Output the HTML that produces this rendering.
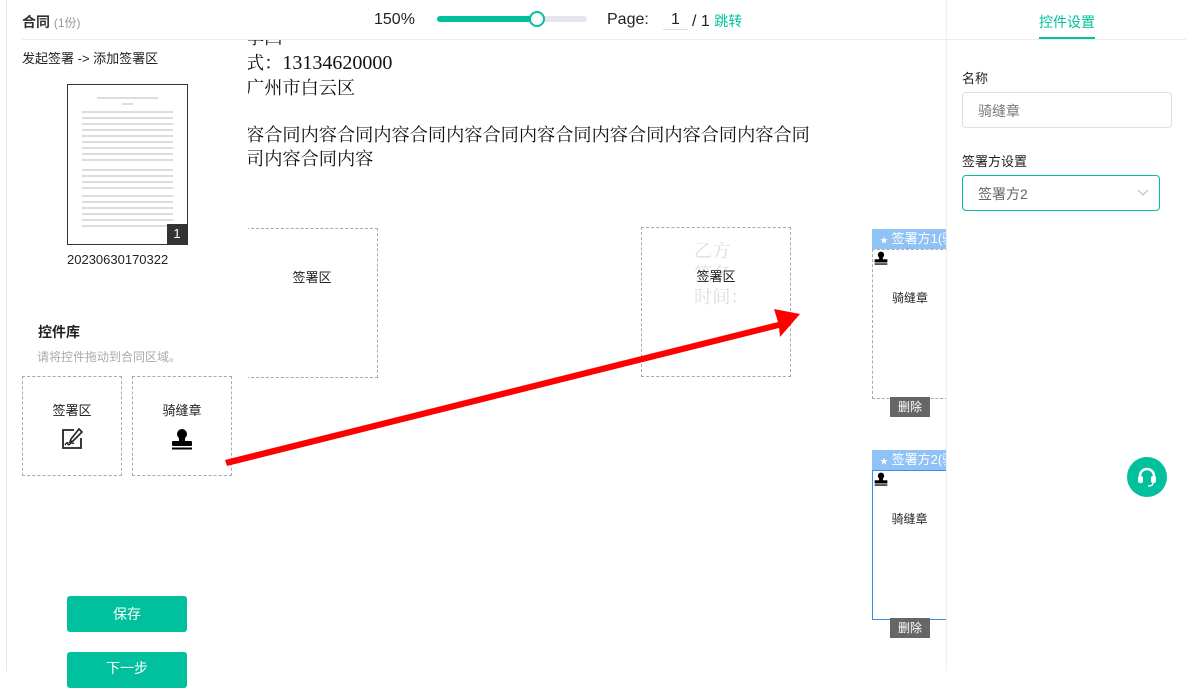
<!DOCTYPE html>
<html><head><meta charset="utf-8"><style>
*{margin:0;padding:0;box-sizing:border-box}
body{width:1186px;height:671px;overflow:hidden;background:#fff;font-family:"Liberation Sans","Noto Sans CJK SC",sans-serif;color:#222;position:relative}
.a{position:absolute}
.serif{font-family:"Liberation Serif","Noto Serif CJK SC",serif;font-size:18.2px;color:#111;white-space:nowrap}
.dash{border:1px dashed #aaa}
.btn{background:#00c09d;color:#fff;border-radius:3px;text-align:center;font-size:14px}
</style></head><body>
<div class="a" style="left:6px;top:0;width:1px;height:671px;background:#e6e6e6"></div>
<div class="a" style="left:22px;top:12px;font-size:14px;font-weight:bold;color:#333">合同 <span style="font-weight:normal;font-size:12px;color:#999">(1份)</span></div>
<div class="a" style="left:22px;top:39px;width:926px;height:1px;background:#ececec"></div>
<div class="a" style="left:946px;top:39px;width:240px;height:1px;background:#ececec"></div>
<div class="a" style="left:22px;top:48px;font-size:13px;color:#222">发起签署 -&gt; 添加签署区</div>
<div class="a" style="left:67px;top:84px;width:121px;height:161px;border:1px solid #333;background:#fff">
<div style="margin:12px 14px;">
<div style="height:2px;background:#ddd;margin:0 15px 4px"></div>
<div style="height:2px;background:#ddd;margin:0 40px 6px"></div>
<div style="height:52px;background:repeating-linear-gradient(#ddd 0 2px,transparent 2px 6px)"></div>
<div style="height:20px;margin-top:6px;background:repeating-linear-gradient(#ddd 0 2px,transparent 2px 6px)"></div>
<div style="height:34px;margin-top:6px;background:repeating-linear-gradient(#ddd 0 2px,transparent 2px 6px)"></div>
</div>
<div class="a" style="right:0;bottom:0;width:20px;height:20px;background:#333;color:#fff;font-size:13px;text-align:center;line-height:20px">1</div>
</div>
<div class="a" style="left:67px;top:252px;font-size:13px;color:#222">20230630170322</div>
<div class="a" style="left:38px;top:322px;font-size:14px;font-weight:bold">控件库</div>
<div class="a" style="left:37px;top:348px;font-size:12px;color:#aaa">请将控件拖动到合同区域。</div>
<div class="a dash" style="left:22px;top:376px;width:100px;height:100px;text-align:center;font-size:13px;padding-top:23px">签署区
<svg width="24" height="24" viewBox="0 0 24 24" style="display:block;margin:8px auto 0"><path d="M14 3H3v18h18V11" fill="none" stroke="#222" stroke-width="1.8"/><path d="M19 2l3 3-9 9-3 1 1-3z" fill="none" stroke="#222" stroke-width="1.6"/><path d="M5 18c2-3 3-3 3-1s2 0 3-1 1 1 3 0" fill="none" stroke="#222" stroke-width="1.4"/></svg></div>
<div class="a dash" style="left:132px;top:376px;width:100px;height:100px;text-align:center;font-size:13px;padding-top:23px">骑缝章
<svg width="22" height="22" viewBox="0 0 22 22" style="display:block;margin:9px auto 0"><circle cx="11" cy="6" r="5"/><rect x="8" y="9" width="6" height="5"/><rect x="1" y="13" width="20" height="5" rx="1"/><rect x="1" y="19.5" width="20" height="2"/></svg></div>
<div class="a btn" style="left:67px;top:596px;width:120px;height:36px;line-height:36px">保存</div>
<div class="a btn" style="left:67px;top:652px;width:120px;height:36px;line-height:32px">下一步</div>

<div class="a" style="left:374px;top:11px;font-size:16px;color:#222">150%</div>
<div class="a" style="left:437px;top:16px;width:150px;height:6px;border-radius:3px;background:#e4e6ee"></div>
<div class="a" style="left:437px;top:16px;width:100px;height:6px;border-radius:3px;background:#00c09d"></div>
<div class="a" style="left:529px;top:11px;width:16px;height:16px;border-radius:50%;background:#fff;border:2px solid #00c09d"></div>
<div class="a" style="left:607px;top:11px;font-size:16px;color:#222">Page:</div>
<div class="a" style="left:663px;top:11px;width:25px;height:19px;border-bottom:1px solid #ddd;text-align:center;font-size:16px">1</div>
<div class="a" style="left:692px;top:11px;font-size:16px">/ 1 <span style="color:#00c09d;font-size:14px">跳转</span></div>

<div class="a" style="left:248px;top:40px;width:698px;height:631px;overflow:hidden">
<div class="a serif" style="left:-2px;top:-16px">李四</div>
<div class="a serif" style="left:-2px;top:9px">式：<span style="font-size:20px">13134620000</span></div>
<div class="a serif" style="left:-2px;top:34px">广州市白云区</div>
<div class="a serif" style="left:-2px;top:81px">容合同内容合同内容合同内容合同内容合同内容合同内容合同内容合同</div>
<div class="a serif" style="left:-2px;top:105px">司内容合同内容</div>
<div class="a dash" style="left:-2px;top:188px;width:132px;height:150px;text-align:center;font-size:13px;padding-top:38px">签署区</div>
<div class="a serif" style="left:446px;top:200px;color:#ddd;line-height:23px">乙方<br>签名<br>时间：</div>
<div class="a dash" style="left:393px;top:187px;width:150px;height:150px;text-align:center;font-size:13px;padding-top:38px">签署区</div>
<div class="a" style="left:624px;top:189px;width:80px;height:20px;background:#8fc3f7;color:#fff;font-size:13px;line-height:20px;white-space:nowrap;padding-left:8px"><span style="font-size:8px">★</span> 签署方1(骑缝章)</div>
<div class="a" style="left:624px;top:209px;width:76px;height:150px;border:1px dashed #aaa;text-align:center;font-size:12px;padding-top:39px">骑缝章</div>
<div class="a" style="left:642px;top:357px;width:40px;height:20px;background:#666;color:#fff;font-size:12px;line-height:20px;text-align:center">删除</div>
<div class="a" style="left:624px;top:410px;width:80px;height:20px;background:#8fc3f7;color:#fff;font-size:13px;line-height:20px;white-space:nowrap;padding-left:8px"><span style="font-size:8px">★</span> 签署方2(骑缝章)</div>
<div class="a" style="left:624px;top:430px;width:75px;height:150px;border:1px solid #3a8ee6;text-align:center;font-size:12px;padding-top:39px">骑缝章</div>
<div class="a" style="left:642px;top:578px;width:40px;height:20px;background:#666;color:#fff;font-size:12px;line-height:20px;text-align:center">删除</div>
<svg class="a" style="left:626px;top:211px" width="14" height="14" viewBox="0 0 22 22"><circle cx="11" cy="6" r="5"/><rect x="8" y="9" width="6" height="5"/><rect x="1" y="13" width="20" height="5"/><rect x="1" y="19.5" width="20" height="2"/></svg>
<svg class="a" style="left:626px;top:432px" width="14" height="14" viewBox="0 0 22 22"><circle cx="11" cy="6" r="5"/><rect x="8" y="9" width="6" height="5"/><rect x="1" y="13" width="20" height="5"/><rect x="1" y="19.5" width="20" height="2"/></svg>
</div>
<div class="a" style="left:946px;top:0;width:1px;height:671px;background:#eee"></div>

<svg class="a" style="left:0;top:0" width="1186" height="671"><polygon points="225,460 778,322 774,309 800,314 780,337 779,328 227,466" fill="#f00"/></svg>

<div class="a" style="left:1039px;top:12px;font-size:14px;color:#00c09d">控件设置</div>
<div class="a" style="left:1039px;top:37px;width:56px;height:2px;background:#00c09d"></div>
<div class="a" style="left:962px;top:68px;font-size:13px;color:#222">名称</div>
<div class="a" style="left:962px;top:92px;width:210px;height:36px;border:1px solid #dcdfe6;border-radius:4px;font-size:14px;color:#777;padding:8px 15px">骑缝章</div>
<div class="a" style="left:962px;top:151px;font-size:13px;color:#222">签署方设置</div>
<div class="a" style="left:962px;top:175px;width:198px;height:36px;border:1px solid #00c09d;border-radius:4px;font-size:14px;color:#666;padding:8px 15px">签署方2</div>
<svg class="a" style="left:1137px;top:189px" width="12" height="8"><path d="M1 1l5 5 5-5" fill="none" stroke="#bbb" stroke-width="1"/></svg>
<div class="a" style="left:1127px;top:457px;width:40px;height:40px;border-radius:50%;background:#00c09d"></div>
<svg class="a" style="left:1133px;top:463px" width="28" height="28" viewBox="0 0 28 28"><path d="M7 16v-3a7 7 0 0 1 14 0v3" fill="none" stroke="#fff" stroke-width="2.5"/><rect x="5" y="13" width="5" height="7" rx="2" fill="#fff"/><rect x="18" y="13" width="5" height="7" rx="2" fill="#fff"/><path d="M20 20c0 2-2 3-5 3" fill="none" stroke="#fff" stroke-width="1.5"/></svg>
</body></html>
